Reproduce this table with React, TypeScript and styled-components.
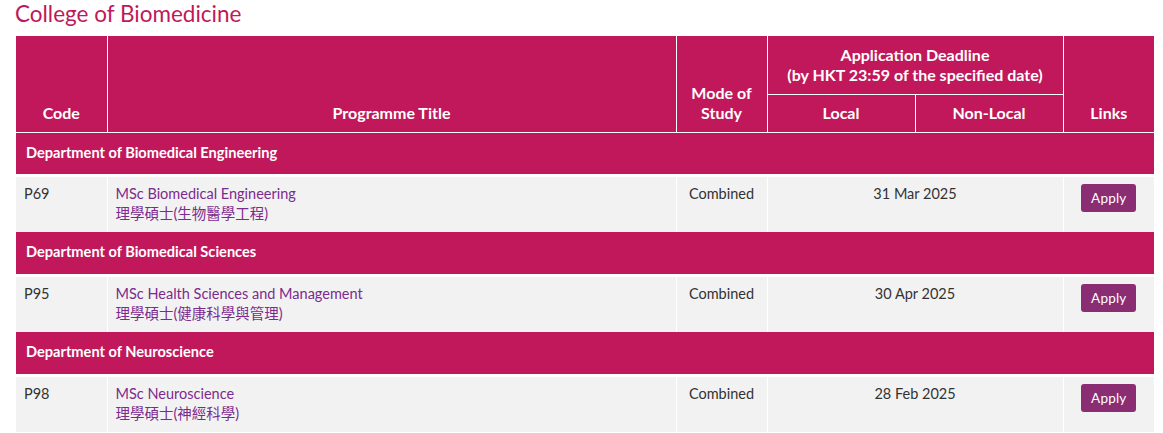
import React from 'react';
import styled, { createGlobalStyle } from 'styled-components';

interface Programme {
  code: string;
  title: string;
  titleZh: string;
  mode: string;
  deadline: string;
}

interface Department {
  name: string;
  programmes: Programme[];
}

const departments: Department[] = [
  {
    name: 'Department of Biomedical Engineering',
    programmes: [
      { code: 'P69', title: 'MSc Biomedical Engineering', titleZh: '理學碩士(生物醫學工程)', mode: 'Combined', deadline: '31 Mar 2025' },
    ],
  },
  {
    name: 'Department of Biomedical Sciences',
    programmes: [
      { code: 'P95', title: 'MSc Health Sciences and Management', titleZh: '理學碩士(健康科學與管理)', mode: 'Combined', deadline: '30 Apr 2025' },
    ],
  },
  {
    name: 'Department of Neuroscience',
    programmes: [
      { code: 'P98', title: 'MSc Neuroscience', titleZh: '理學碩士(神經科學)', mode: 'Combined', deadline: '28 Feb 2025' },
    ],
  },
];

const GlobalStyle = createGlobalStyle`
  body {
    margin: 0;
    background: #fff;
    font-family: Lato, "Noto Sans CJK TC", sans-serif;
    color: #333;
  }
`;

const Page = styled.div`
  padding: 0 9px 0 16px;
`;

const Heading = styled.h2`
  margin: 0 0 0 -1px;
  padding-top: 1px;
  height: 35px;
  font-size: 22.5px;
  font-weight: 400;
  line-height: 26px;
  color: #c0185a;
`;

const Table = styled.table`
  width: 1138px;
  border-collapse: collapse;
  table-layout: fixed;
  font-size: 14.5px;
`;

const HeadCell = styled.th<{ $align?: 'bottom' | 'middle' }>`
  background: #c0185a;
  color: #fff;
  font-weight: 700;
  font-size: 16px;
  line-height: 20px;
  border: 1px solid #fff;
  border-top: none;
  text-align: center;
  vertical-align: ${(p) => p.$align ?? 'bottom'};
  padding: ${(p) => (p.$align === 'middle' ? '0 8px' : '0 8px 9px')};
  &:first-child { border-left: none; }
  &:last-child { border-right: none; }
`;

const TopRow = styled.tr`
  height: 58px;
`;

const SubRow = styled.tr`
  height: 38px;
`;

const DeptRow = styled.tr`
  height: 43px;
`;

const DeptCell = styled.td`
  background: #c0185a;
  color: #fff;
  font-weight: 700;
  font-size: 14.6px;
  padding: 0 10px 2px;
  border-bottom: 3px solid #fff;
`;

const DataRow = styled.tr`
  height: 57px;
`;

const Cell = styled.td<{ $center?: boolean }>`
  background: #f2f2f2;
  vertical-align: top;
  padding: 7px 8px 0;
  line-height: 20px;
  border-left: 1px solid #fff;
  border-right: 1px solid #fff;
  text-align: ${(p) => (p.$center ? 'center' : 'left')};
  &:first-child { border-left: none; }
  &:last-child { border-right: none; }
`;

const ButtonCell = styled(Cell)`
  padding-top: 7px;
`;

const TitleLink = styled.a`
  display: block;
  color: #7d2a8e;
  text-decoration: none;
`;

const ApplyButton = styled.a`
  display: inline-block;
  width: 55px;
  height: 28px;
  line-height: 28px;
  border-radius: 3px;
  background: #8b2d72;
  color: #fff;
  font-size: 13.5px;
  text-align: center;
  text-decoration: none;
  letter-spacing: 0.2px;
`;

const App: React.FC = () => (
  <Page>
    <GlobalStyle />
    <Heading>College of Biomedicine</Heading>
    <Table>
      <colgroup>
        <col style={{ width: 91 }} />
        <col style={{ width: 569 }} />
        <col style={{ width: 91 }} />
        <col style={{ width: 148 }} />
        <col style={{ width: 148 }} />
        <col style={{ width: 91 }} />
      </colgroup>
      <thead>
        <TopRow>
          <HeadCell rowSpan={2}>Code</HeadCell>
          <HeadCell rowSpan={2}>Programme Title</HeadCell>
          <HeadCell rowSpan={2}>Mode of<br />Study</HeadCell>
          <HeadCell colSpan={2} $align="middle">
            Application Deadline<br />(by HKT 23:59 of the specified date)
          </HeadCell>
          <HeadCell rowSpan={2}>Links</HeadCell>
        </TopRow>
        <SubRow>
          <HeadCell>Local</HeadCell>
          <HeadCell>Non-Local</HeadCell>
        </SubRow>
      </thead>
      <tbody>
        {departments.map((dept) => (
          <React.Fragment key={dept.name}>
            <DeptRow>
              <DeptCell colSpan={6}>{dept.name}</DeptCell>
            </DeptRow>
            {dept.programmes.map((p) => (
              <DataRow key={p.code}>
                <Cell>{p.code}</Cell>
                <Cell>
                  <TitleLink href="#">{p.title}</TitleLink>
                  <TitleLink href="#">{p.titleZh}</TitleLink>
                </Cell>
                <Cell $center>{p.mode}</Cell>
                <Cell $center colSpan={2}>{p.deadline}</Cell>
                <ButtonCell $center>
                  <ApplyButton href="#">Apply</ApplyButton>
                </ButtonCell>
              </DataRow>
            ))}
          </React.Fragment>
        ))}
      </tbody>
    </Table>
  </Page>
);

export default App;
